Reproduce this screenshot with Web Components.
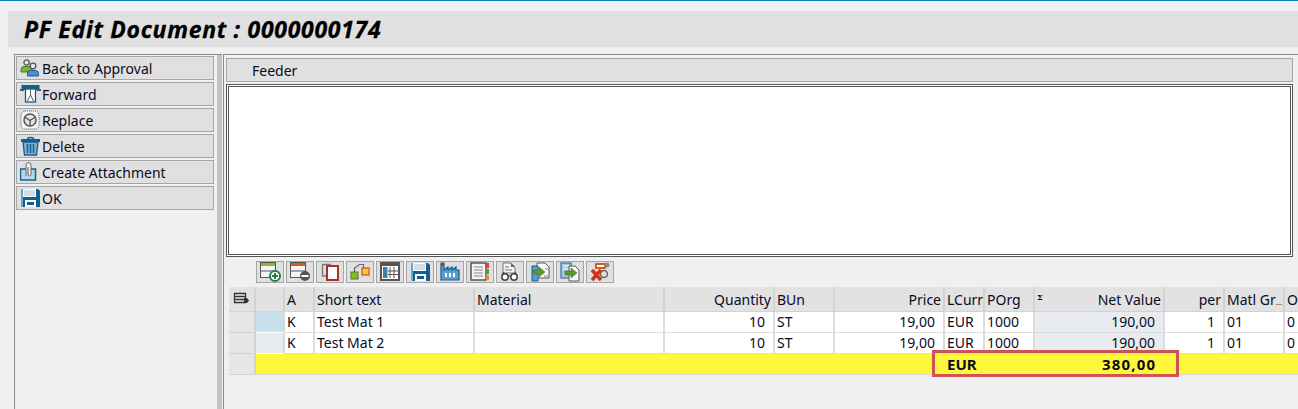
<!DOCTYPE html>
<html>
<head>
<meta charset="utf-8">
<style>
  html, body { margin: 0; height: 409px; overflow: hidden; background: #f0f0f0; }
  body { font-family: "Noto Sans", "DejaVu Sans", sans-serif; color: #000; }
  sap-page { display: block; }
</style>
</head>
<body>
<sap-page>
  <sap-title slot="title">PF Edit Document : 0000000174</sap-title>
  <sap-side slot="side">
    <sap-button icon="users">Back to Approval</sap-button>
    <sap-button icon="forward">Forward</sap-button>
    <sap-button icon="replace">Replace</sap-button>
    <sap-button icon="trash">Delete</sap-button>
    <sap-button icon="attach">Create Attachment</sap-button>
    <sap-button icon="save">OK</sap-button>
  </sap-side>
  <sap-feeder slot="feeder">Feeder</sap-feeder>
  <sap-toolbar slot="toolbar">
    <sap-tool icon="rowadd"></sap-tool>
    <sap-tool icon="rowdel"></sap-tool>
    <sap-tool icon="copy"></sap-tool>
    <sap-tool icon="tree"></sap-tool>
    <sap-tool icon="columns"></sap-tool>
    <sap-tool icon="save"></sap-tool>
    <sap-tool icon="factory"></sap-tool>
    <sap-tool icon="list"></sap-tool>
    <sap-tool icon="glasses"></sap-tool>
    <sap-tool icon="export"></sap-tool>
    <sap-tool icon="import"></sap-tool>
    <sap-tool icon="cancel"></sap-tool>
  </sap-toolbar>
  <sap-table slot="table"></sap-table>
</sap-page>

<script>
const ICONS = {
  users: `<circle cx="6.500" cy="4.500" r="2.600" fill="#e8e8e8" stroke="#555" stroke-width="1.300"/><path d="M1 14v-2.500q0-3 3-3h5q3 0 3 3V14z" fill="#7fae3c" stroke="#4b7a1e"/><circle cx="13" cy="8" r="2.800" fill="#e8e8e8" stroke="#555" stroke-width="1.300"/><path d="M7.500 18v-2.500q0-3 3-3h5q3 0 3 3V18z" fill="#4a90c4" stroke="#145f8f"/>`,
  forward: `<rect x="1.500" y="1" width="18" height="5" fill="#12608f"/><rect x="0" y="5" width="4" height="2" fill="#555"/><rect x="17" y="5" width="4" height="2" fill="#555"/><rect x="5.500" y="5" width="10" height="13" fill="#fff" stroke="#12608f" stroke-width="1.300"/><path d="M10.500 6v5l-3 6M10.500 11l3 6" fill="none" stroke="#555"/>`,
  replace: `<rect x="1" y="1" width="18" height="18" rx="4" fill="#f4f4f4" stroke="#555" stroke-dasharray="1 1"/><circle cx="10" cy="10" r="6" fill="#e4e4e4" stroke="#555" stroke-width="1.500"/><path d="M4.500 7l5.500 3.500 5.500-3.500M10 10.500V16" fill="none" stroke="#555" stroke-width="1.300"/>`,
  trash: `<path d="M7 2.500q3.500-2 7 0" fill="none" stroke="#12608f" stroke-width="1.500"/><rect x="1" y="3" width="19" height="3" fill="#12608f"/><path d="M3 6h15l-1.500 13h-12z" fill="#7eaed0" stroke="#12608f" stroke-width="1.300"/><path d="M7.500 8v9M10.500 8v9M13.500 8v9" stroke="#12608f" stroke-width="1.500"/>`,
  attach: `<path d="M5.500 7h10v11h-15V7z" fill="#bcd6e8" stroke="#12608f" stroke-width="1.500"/><path d="M6 14V3.500q0-3 2.500-3t2.500 3V12q0 2-1.500 2T8 12V5" fill="#f0f0f0" stroke="#666"/>`,
  save: `<path d="M1 1h17l2 2v16H1z" fill="#12608f"/><rect x="3" y="1" width="13" height="8" fill="#fff"/><rect x="4" y="2" width="11" height="6" fill="#cfe0ec"/><rect x="5" y="12" width="11" height="7" fill="#fff"/><rect x="7" y="14" width="7" height="3" fill="#12608f"/><rect x="1" y="1" width="2" height="18" fill="#6ea2c8"/>`,
  rowadd: `<rect x=".5" y=".5" width="15" height="15" fill="#f4f4f4" stroke="#555"/><rect x="1" y="1" width="14" height="3" fill="#8cb82b"/><path d="M1 9h14" stroke="#555"/><circle cx="15" cy="14" r="5" fill="#fff" stroke="#2d7a46" stroke-width="2"/><path d="M12 14h6M15 11v6" stroke="#2d7a46" stroke-width="2"/>`,
  rowdel: `<rect x=".5" y=".5" width="15" height="15" fill="#f4f4f4" stroke="#555"/><rect x="1" y="1" width="14" height="3" fill="#d85a1c"/><path d="M1 9h14" stroke="#555"/><circle cx="15" cy="14" r="5" fill="#555"/><path d="M11.500 14h7" stroke="#fff" stroke-width="2"/>`,
  copy: `<path d="M11 2.500H2.500V14H6" fill="none" stroke="#777" stroke-width="1.300"/><rect x="7" y="4" width="11" height="14" fill="#fff" stroke="#a83224" stroke-width="2"/>`,
  tree: `<rect x="1" y="10" width="7" height="7" fill="#8cb82b" stroke="#4b7a1e"/><rect x="12" y="6" width="7" height="7" fill="#f5c542" stroke="#d85a1c" stroke-width="1.300"/><path d="M4.500 10V6l5-3.500h4V6" fill="none" stroke="#666" stroke-width="1.200"/>`,
  columns: `<rect x="1" y="1" width="18" height="17" fill="#fff" stroke="#555" stroke-width="2"/><rect x="2" y="2" width="16" height="2" fill="#555"/><rect x="3" y="5" width="4.500" height="11" fill="#3f7fae"/><path d="M10 5v11M14 5v11M8 9h10M8 12.500h10" stroke="#555"/>`,
  factory: `<path d="M1 1h3v7l4-3v3l4-3v3l4-3v3h3v10H1z" fill="#5b9ed0" stroke="#12608f" stroke-width="1.200"/><rect x="1" y="1" width="3" height="3" fill="#d8242c"/><rect x="5" y="11" width="2" height="4" fill="#fff"/><rect x="9" y="11" width="2" height="4" fill="#fff"/><rect x="13" y="11" width="2" height="4" fill="#fff"/>`,
  list: `<rect x="1" y="1" width="15" height="17" fill="#f4f4f4" stroke="#555" stroke-width="1.500"/><path d="M4 5h9M4 8h9M4 11h9M4 14h9" stroke="#888"/><rect x="16" y="1" width="3" height="5" fill="#d8442c"/><rect x="16" y="7" width="3" height="5" fill="#5a9a2c"/><rect x="16" y="13" width="3" height="5" fill="#e8902c"/>`,
  glasses: `<path d="M3 1h8l4 4v6H3z" fill="#f4f4f4" stroke="#777"/><path d="M11 1v4h4z" fill="#666"/><path d="M5 5h4M5 8h7" stroke="#777"/><circle cx="5" cy="15" r="3.200" fill="#fff" stroke="#444" stroke-width="1.500"/><circle cx="14" cy="15" r="3.200" fill="#fff" stroke="#444" stroke-width="1.500"/><path d="M8 14h3M2 13l2-3M17 13l-2-3" stroke="#444" stroke-width="1.200"/>`,
  export: `<path d="M7 1h8l4 4v11H7z" fill="#f8f8f8" stroke="#555"/><path d="M2 4h6v15H2z" fill="#5b9ed0" stroke="#12608f"/><path d="M3 8h6V5l6 5-6 5v-3H3z" fill="#5a9a2c" stroke="#3d7a1e" stroke-width=".6"/><path d="M14 14h4M15 7h3" stroke="#888"/>`,
  import: `<rect x="1" y="1" width="10" height="15" fill="#a8cbe4" stroke="#12608f"/><path d="M3 4h6M3 7h6" stroke="#fff"/><path d="M9 4h6l4 4v11H9z" fill="#f8f8f8" stroke="#555"/><path d="M5 9h6V6l6 5-6 5v-3H5z" fill="#5a9a2c" stroke="#3d7a1e" stroke-width=".6"/>`,
  cancel: `<rect x="5" y="1" width="11" height="6" rx="1" fill="#d85a1c"/><rect x="7" y="3" width="7" height="2" fill="#fff"/><circle cx="17" cy="3" r="2.500" fill="#888"/><circle cx="14" cy="12" r="3.500" fill="#ddd" stroke="#666" stroke-width="1.500"/><path d="M2 8l9 10M11 8L2 18" stroke="#c8341c" stroke-width="3.500"/>`
};

function iconSvg(name, w, h) {
  return `<svg width="${w}" height="${h}" viewBox="0 0 21 20">${ICONS[name] || ''}</svg>`;
}

class SapPage extends HTMLElement {
  constructor() {
    super();
    this.attachShadow({ mode: 'open' }).innerHTML = `
      <style>
        :host { display: block; height: 409px; border-top: 1px solid #0a7ec2; box-sizing: border-box; padding-top: 10px; overflow: hidden; }
        .main { display: flex; margin-top: 7px; height: 355px; }
        .side { width: 203px; margin-left: 14px; flex: none; border: 1px solid #8c8c8c; border-width: 1px 0 0 1px; box-sizing: border-box; }
        .split { width: 5px; flex: none; background: #c4c4c4; border-top: 1px solid #8c8c8c; box-sizing: border-box; }
        .right { flex: 1; min-width: 0; margin-left: 1px; border: 1px solid #8c8c8c; border-width: 1px 0 0 1px; box-sizing: border-box; }
      </style>
      <slot name="title"></slot>
      <div class="main">
        <div class="side"><slot name="side"></slot></div>
        <div class="split"></div>
        <div class="right">
          <slot name="feeder"></slot>
          <slot name="toolbar"></slot>
          <slot name="table"></slot>
        </div>
      </div>`;
  }
}

class SapTitle extends HTMLElement {
  constructor() {
    super();
    this.attachShadow({ mode: 'open' }).innerHTML = `
      <style>
        :host { display: flex; align-items: center; height: 36px; margin-left: 8px; padding-left: 16px; background: #e0e0e0;
          font: italic bold 23px "Noto Sans", sans-serif; letter-spacing: .7px; -webkit-text-stroke: .3px #000; color: #000; }
      </style><slot></slot>`;
  }
}

class SapSide extends HTMLElement {
  constructor() {
    super();
    this.attachShadow({ mode: 'open' }).innerHTML = `
      <style>:host { display: flex; flex-direction: column; gap: 2px; padding: 1px 0 0 1px; }</style><slot></slot>`;
  }
}

class SapButton extends HTMLElement {
  constructor() {
    super();
    this.attachShadow({ mode: 'open' }).innerHTML = `
      <style>
        :host { display: flex; align-items: center; width: 198px; height: 24px; box-sizing: border-box; background: #e0e0e0;
          border: 1px solid #a6a6a6; font-size: 14px; color: #0a0a1e; padding-left: 3px; gap: 1px; white-space: nowrap; }
        svg { flex: none; display: block; }
      </style>
      ${iconSvg(this.getAttribute('icon'), 21, 20)}<slot></slot>`;
  }
}

class SapFeeder extends HTMLElement {
  constructor() {
    super();
    this.attachShadow({ mode: 'open' }).innerHTML = `
      <style>
        :host { display: block; padding: 3px 5px 0 2px; }
        .head { height: 24px; box-sizing: border-box; border: 1px solid #a6a6a6; background: #e0e0e0; padding-left: 25px;
          font-size: 14px; line-height: 24px; color: #0a0a1e; }
        .box { margin-top: 2px; height: 173px; box-sizing: border-box; background: #fff; border: 3px double #555; }
      </style>
      <div class="head"><slot></slot></div>
      <div class="box"></div>`;
  }
}

class SapToolbar extends HTMLElement {
  constructor() {
    super();
    this.attachShadow({ mode: 'open' }).innerHTML = `
      <style>
        :host { display: flex; gap: 2px; height: 22px; margin: 4px 0 4px 32px; }
      </style><slot></slot>`;
  }
}

class SapTool extends HTMLElement {
  constructor() {
    super();
    this.attachShadow({ mode: 'open' }).innerHTML = `
      <style>
        :host { display: flex; align-items: center; justify-content: center; width: 28px; height: 22px; box-sizing: border-box;
          background: #e0e0e0; border: 1px solid #a6a6a6; }
        svg { display: block; }
      </style>
      ${iconSvg(this.getAttribute('icon'), 21, 20)}`;
  }
}

const COLUMNS = [
  { key: 'corner', w: 27 }, { key: 'sel', w: 29 },
  { t: 'A', w: 30 }, { t: 'Short text', w: 160 }, { t: 'Material', w: 190 },
  { t: 'Quantity', w: 110, r: 1 }, { t: 'BUn', w: 60 }, { t: 'Price', w: 110, r: 1 },
  { t: 'LCurr', w: 40 }, { t: 'POrg', w: 50 }, { t: 'Net Value', w: 130, r: 1, sum: 1 },
  { t: 'per', w: 60, r: 1 }, { t: 'Matl Gr', w: 60, clip: 1 }, { t: 'O', w: 40 }
];
const ROWS = [
  ['K', 'Test Mat 1', '', '10', 'ST', '19,00', 'EUR', '1000', '190,00', '1', '01', '0'],
  ['K', 'Test Mat 2', '', '10', 'ST', '19,00', 'EUR', '1000', '190,00', '1', '01', '0']
];

class SapTable extends HTMLElement {
  constructor() {
    super();
    const cols = COLUMNS.map(c => c.w + 'px').join(' ');
    const data = COLUMNS.slice(2);
    const head = data.map(c =>
      `<div class="h ${c.r ? 'r' : ''}">${c.sum ? '<i>Σ</i>' : ''}${c.t}${c.clip ? '<u>…</u>' : ''}</div>`).join('');
    const rows = ROWS.map((row, i) => `
      <div class="rh"></div><div class="sel ${i === 0 ? 'on' : ''}"></div>
      ${row.map((v, j) => `<div class="c ${data[j].r ? 'r' : ''} ${data[j].sum ? 'nv' : ''}">${v}</div>`).join('')}`).join('');
    this.attachShadow({ mode: 'open' }).innerHTML = `
      <style>
        :host { display: block; position: relative; margin-left: 5px; font-size: 14px; color: #0a0a1e; }
        .grid { display: grid; grid-template-columns: ${cols}; grid-template-rows: 25px 21px 21px 21px; width: 1069px; overflow: hidden; }
        .corner, .h, .hs { background: #e2e2e2; border-right: 2px solid #d2d2d2; border-bottom: 1px solid #d2d2d2; box-sizing: border-box; }
        .corner { display: flex; align-items: center; justify-content: center; }
        .h { position: relative; line-height: 25px; padding: 0 2px; white-space: nowrap; overflow: hidden; }
        .h.r, .c.r { text-align: right; }
        .h.r { padding-right: 2px; }
        .h i { position: absolute; left: 2px; top: 5px; font: bold 8px "DejaVu Serif", serif; }
        .h u { text-decoration: none; font-size: 8px; }
        .rh { background: #e6e6e6; border-right: 2px solid #d2d2d2; border-bottom: 1px solid #d2d2d2; box-sizing: border-box; }
        .sel { background: #e8ecf0; border-right: 2px solid #d8d8d8; border-bottom: 1px solid #fff; box-sizing: border-box; }
        .sel.on { background: #c8dfec; }
        .c { background: #fff; border-right: 2px solid #dcdcdc; border-bottom: 1px solid #dcdcdc; box-sizing: border-box; line-height: 20px; padding: 0 2px; white-space: nowrap; overflow: hidden; }
        .c.r { padding-right: 8px; }
        .c.nv { background: #e8ecf0; }
        .total { grid-column: 2 / -1; position: relative; background: #fff73c; border-bottom: 1px solid #dcdcdc; box-sizing: border-box; font-weight: bold; font-size: 15px; line-height: 20px; }
        .total span { position: absolute; }
        .cur { left: 691px; }
        .sum { left: 846px; letter-spacing: 1.2px; }
        .mark { position: absolute; left: 703px; top: 63px; width: 247px; height: 27px; box-sizing: border-box; border: 3px solid #cf5257; }
      </style>
      <div class="grid">
        <div class="corner"><svg width="17" height="14" viewBox="0 0 17 14"><path d="M1.500 1.500h11v9h-11zM1.500 4.500h11M1.500 7.500h11" fill="#eee" stroke="#333" stroke-width="1.300"/><path d="M11 6h3l2 2.500-2 2.500h-3z" fill="#333"/></svg></div>
        <div class="hs"></div>
        ${head}
        ${rows}
        <div class="rh"></div>
        <div class="total"><span class="cur">EUR</span><span class="sum">380,00</span></div>
      </div>
      <div class="mark"></div>`;
  }
}

customElements.define('sap-page', SapPage);
customElements.define('sap-title', SapTitle);
customElements.define('sap-side', SapSide);
customElements.define('sap-button', SapButton);
customElements.define('sap-feeder', SapFeeder);
customElements.define('sap-toolbar', SapToolbar);
customElements.define('sap-tool', SapTool);
customElements.define('sap-table', SapTable);
</script>
</body>
</html>
